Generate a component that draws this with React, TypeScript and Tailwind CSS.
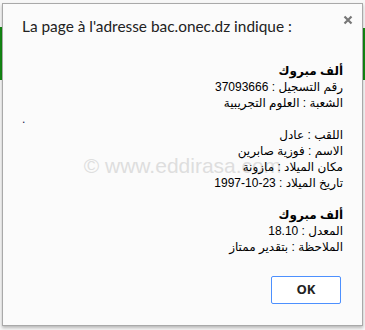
import React from 'react';

const lines: { text: string; bold?: boolean; dot?: boolean }[] = [
  { text: 'ألف مبروك', bold: true },
  { text: 'رقم التسجيل : 37093666' },
  { text: 'الشعبة : العلوم التجريبية' },
  { text: '.', dot: true },
  { text: 'اللقب : عادل' },
  { text: 'الاسم : فوزية صابرين' },
  { text: 'مكان الميلاد : مازونة' },
  { text: 'تاريخ الميلاد : 23-10-1997' },
  { text: '' },
  { text: 'ألف مبروك', bold: true },
  { text: 'المعدل : 18.10' },
  { text: 'الملاحظة : بتقدير ممتاز' },
];

const App = () => {
  return (
    <div className="relative w-[365px] h-[330px] bg-[#f7f7f7] overflow-hidden">
      {/* page behind the dialog */}
      <div className="absolute left-0 top-[27px] w-[3px] h-[53px] bg-[#138a13]" />
      <div className="absolute right-0 top-[28px] w-[3px] h-[52px] bg-[#138a13]" />

      <div className="relative ml-[2px] mt-[3px] w-[361px] h-[323px] bg-[#fbfbfb] border border-[#a9a9a9] shadow-[0_2px_3px_rgba(0,0,0,0.25)] flex flex-col">
        {/* header */}
        <div className="flex items-start justify-between pl-[19px] pr-[9px] pt-[12px]">
          <span className="text-[15.4px] leading-[20px] text-[#222] font-['Lato',sans-serif]">
            La page à l'adresse bac.onec.dz indique :
          </span>
          <svg width="10" height="10" viewBox="0 0 10 10" className="-mt-[1px]">
            <path d="M1.5 1.5 L8.5 8.5 M8.5 1.5 L1.5 8.5" stroke="#777" strokeWidth="2.2" />
          </svg>
        </div>

        {/* message */}
        <div className="relative mt-[27px] px-[19px] font-['Liberation_Sans','DejaVu_Sans',sans-serif] text-[12px] leading-[16px] text-black">
          <div className="absolute left-0 right-0 top-[91px] text-center text-[21px] leading-[24px] text-[#dedede] font-['Liberation_Sans',sans-serif]">
            © www.eddirasa.com
          </div>
          {lines.map((l, i) =>
            l.dot ? (
              <div key={i} className="relative h-[16px] text-left text-[#22224a]">.</div>
            ) : (
              <div key={i} dir="rtl" className={`relative h-[16px] text-right ${l.bold ? 'font-bold' : ''}`}>
                {l.text}
              </div>
            )
          )}
        </div>

        {/* actions */}
        <div className="flex justify-end pr-[21px] mt-[21px]">
          <button className="w-[70px] h-[28px] border border-[#4d90fe] rounded-[2px] bg-white text-[13px] font-bold text-[#222] font-['Open_Sans',sans-serif]">
            OK
          </button>
        </div>
      </div>
    </div>
  );
};

export default App;
